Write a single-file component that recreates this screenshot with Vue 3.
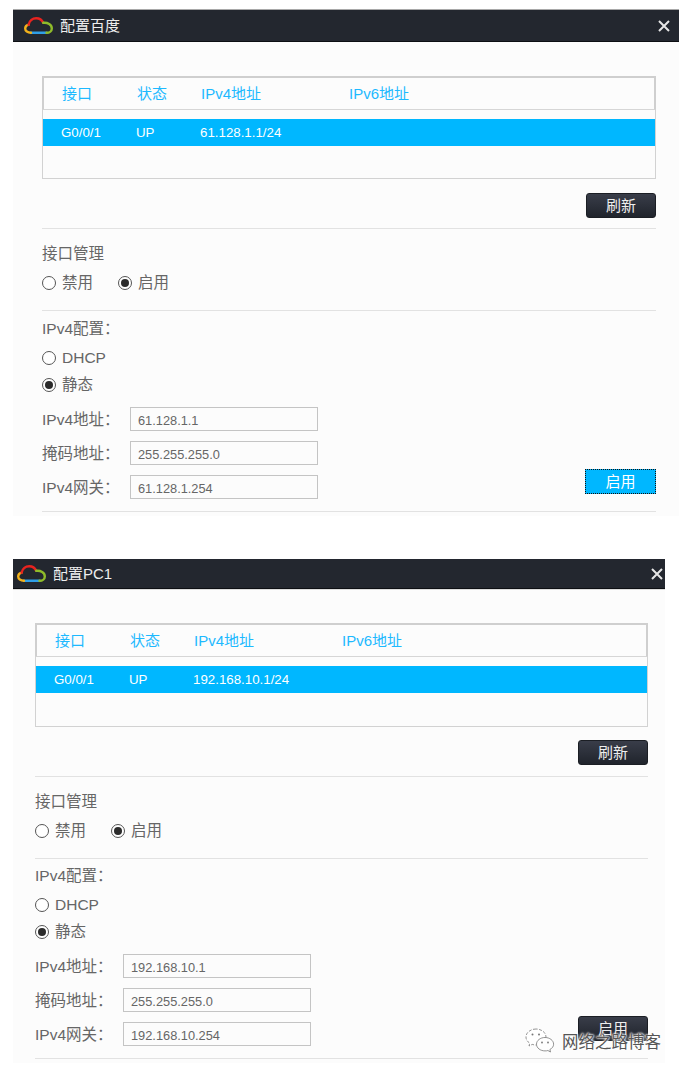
<script setup>
const dialogs = [
  { key: 'one', title: '配置百度', addr: '61.128.1.1/24', ip: '61.128.1.1', gw: '61.128.1.254', active: true },
  { key: 'two', title: '配置PC1', addr: '192.168.10.1/24', ip: '192.168.10.1', gw: '192.168.10.254', active: false }
]
</script>

<template>
  <div class="page">
    <section v-for="d in dialogs" :key="d.key" class="dialog" :class="d.key">
      <header class="titlebar">
        <svg class="logo" width="29" height="17" viewBox="0 0 29 17" fill="none" stroke-width="2.4" stroke-linecap="round">
          <path d="M7 15.8H22.5" stroke="#2f9fe8" />
          <path d="M7 15.8C3.6 15.8 1.2 14 1.2 11.5C1.2 9.6 2.6 8.2 4.6 7.7" stroke="#f2b21c" />
          <path d="M4.6 7.7C5.4 3.6 8.6 1.2 12.2 1.2C15.4 1.2 18 3 19.2 5.8" stroke="#e8231f" />
          <path d="M19.2 5.8C23.6 5.2 27.8 7.6 27.8 11.4C27.8 14 25.6 15.8 22.5 15.8" stroke="#8fbc2a" />
        </svg>
        <span class="title">{{ d.title }}</span>
        <svg class="close" width="12" height="12" viewBox="0 0 12 12" stroke="#e6e6e6" stroke-width="2">
          <path d="M1 1L11 11M11 1L1 11" />
        </svg>
      </header>

      <div class="body">
        <div class="table">
          <div class="thead">
            <span>接口</span><span>状态</span><span>IPv4地址</span><span>IPv6地址</span>
          </div>
          <div class="trow">
            <span>G0/0/1</span><span>UP</span><span>{{ d.addr }}</span><span></span>
          </div>
        </div>

        <div class="refresh-line"><button class="btn">刷新</button></div>
        <div class="rule rule-a"></div>

        <div class="line heading-a">接口管理</div>
        <div class="radios line">
          <span class="radio"><i class="dot"></i>禁用</span>
          <span class="radio"><i class="dot on"></i>启用</span>
        </div>
        <div class="rule rule-b"></div>

        <div class="line heading-b">IPv4配置：</div>
        <div class="radio line radio-dhcp"><i class="dot"></i>DHCP</div>
        <div class="radio line radio-static"><i class="dot on"></i>静态</div>

        <div class="form">
          <div class="fields">
            <label class="field"><span class="field-name">IPv4地址：</span><input readonly :value="d.ip" /></label>
            <label class="field"><span class="field-name">掩码地址：</span><input readonly value="255.255.255.0" /></label>
            <label class="field"><span class="field-name">IPv4网关：</span><input readonly :value="d.gw" /></label>
          </div>
          <button class="btn" :class="{ active: d.active }">启用</button>
        </div>
        <div class="rule rule-c"></div>
      </div>
    </section>

    <div class="watermark">
      <svg width="30" height="25" viewBox="0 0 30 25" fill="#fff" stroke="#777" stroke-width="0.8">
        <path d="M11 1C5.5 1 1 4.6 1 9C1 11.6 2.5 13.8 4.8 15.2L4 18L7.2 16.4C8.400 16.800 9.700 17 11 17C16.500 17 21 13.400 21 9C21 4.600 16.500 1 11 1Z" stroke-dasharray="3 1.500" />
        <path d="M20 9.500C15.300 9.500 11.500 12.500 11.500 16.200C11.500 19.900 15.300 22.900 20 22.900C21 22.900 22 22.800 22.900 22.500L25.500 24L24.900 21.500C27.200 20.300 28.600 18.400 28.600 16.200C28.600 12.500 24.700 9.500 20 9.500Z" />
        <circle cx="7.500" cy="6.500" r="1" fill="#777" stroke="none" />
        <circle cx="14" cy="6.500" r="1" fill="#777" stroke="none" />
        <circle cx="17" cy="14.500" r="0.900" fill="#777" stroke="none" />
        <circle cx="23" cy="14.500" r="0.900" fill="#777" stroke="none" />
      </svg>
      <span>网络之路博客</span>
    </div>
  </div>
</template>

<style>
html, body { background: #fff; }
</style>

<style scoped>
.page {
  position: relative;
  height: 1071px;
  padding-top: 10px;
  box-sizing: border-box;
  overflow: hidden;
  font-family: "Liberation Sans", "Noto Sans CJK SC", sans-serif;
  font-size: 15.5px;
  color: #666;
}
.dialog {
  margin-left: 13px;
  background: #fcfcfc;
}
.dialog.one { width: 666px; }
.dialog.two { width: 652px; margin-top: 43px; }

.titlebar {
  display: flex;
  align-items: center;
  box-sizing: border-box;
  background: #23272f;
  color: #eee;
  font-size: 15px;
}
.one .titlebar {
  height: 32px;
  padding: 0 9px 0 11px;
  border-bottom: 1px solid #0d0f13;
  box-shadow: 0 -1px 0 #a8a8a8;
}
.two .titlebar {
  height: 30px;
  padding: 0 2px 0 4px;
  border-bottom: 1px solid #0d0f13;
  box-shadow: 0 1px 0 #ddd;
}
.logo { flex: none; margin-right: 7px; }
.title { flex: 1; line-height: 20px; }
.close { flex: none; }

.body { padding-top: 34px; padding-bottom: 4px; }
.one .body { padding-left: 29px; padding-right: 23px; }
.two .body { padding-left: 22px; padding-right: 17px; }

.table {
  box-sizing: border-box;
  height: 103px;
  border: 1px solid #d2d2d2;
}
.two .table { height: 104px; }
.thead, .trow {
  display: grid;
  align-items: center;
}
.thead {
  box-sizing: border-box;
  height: 34px;
  margin: -1px -1px 0;
  padding-left: 18px;
  padding-bottom: 3px;
  border: 2px solid #cfcfcf;
  border-bottom-width: 1px;
  border-bottom-color: #d6d6d6;
  color: #1db9ff;
  font-size: 15px;
  grid-template-columns: 75px 64px 148px 1fr;
}
.trow {
  height: 27px;
  margin-top: 9px;
  padding-left: 18px;
  background: #00b7ff;
  color: #fff;
  font-size: 13.300px;
  grid-template-columns: 75px 64px 148px 1fr;
}

.refresh-line {
  display: flex;
  justify-content: flex-end;
  margin-top: 14px;
}
.two .refresh-line { margin-top: 13px; }
.btn {
  box-sizing: border-box;
  width: 70px;
  height: 25px;
  padding: 0;
  border: 1px solid #1b1e24;
  border-radius: 3px;
  background: linear-gradient(#393d49, #20242c);
  color: #eee;
  font-family: inherit;
  font-size: 15px;
  line-height: 23px;
}
.btn.active {
  width: 71px;
  border: 1px dotted #111;
  border-radius: 0;
  background: #00b7ff;
  color: #fff;
}

.rule { height: 1px; background: #e2e2e2; }
.rule-a { margin-top: 10px; }
.two .rule-a { margin-top: 11px; }
.rule-b { margin-top: 17px; }
.rule-c { margin-top: 12px; }

.line { height: 20px; line-height: 20px; }
.heading-a { margin-top: 15px; }
.radios { display: flex; gap: 25px; margin-top: 9px; }
.heading-b { margin-top: 8px; }
.two .heading-b { margin-top: 7px; }
.radio-dhcp { margin-top: 9px; }
.radio-static { margin-top: 7px; }

.radio { display: flex; align-items: center; }
.dot {
  position: relative;
  flex: none;
  box-sizing: border-box;
  width: 14px;
  height: 14px;
  margin-right: 6px;
  border: 1.500px solid #555;
  border-radius: 50%;
  background: #fff;
}
.dot.on::after {
  content: "";
  position: absolute;
  inset: 2px;
  border-radius: 50%;
  background: #2b2b2b;
}

.form {
  display: flex;
  justify-content: space-between;
  align-items: flex-end;
  margin-top: 12px;
}
.fields { display: flex; flex-direction: column; gap: 10px; }
.field { display: flex; align-items: center; height: 24px; }
.field-name { width: 88px; padding-bottom: 2px; }
.field input {
  box-sizing: border-box;
  width: 188px;
  height: 24px;
  padding: 2px 0 0 7px;
  border: 1px solid #c4c4c4;
  border-radius: 0;
  outline: none;
  background: #fcfcfc;
  color: #666;
  font-family: inherit;
  font-size: 12.800px;
}
.form .btn { margin-bottom: 5px; }

.watermark {
  position: absolute;
  left: 525px;
  top: 1028px;
  display: flex;
  align-items: center;
  gap: 7px;
  color: #555;
  font-size: 16.500px;
  text-shadow: 0 0 2px #fff, 0 0 2px #fff, 0 0 3px #fff;
}
</style>
